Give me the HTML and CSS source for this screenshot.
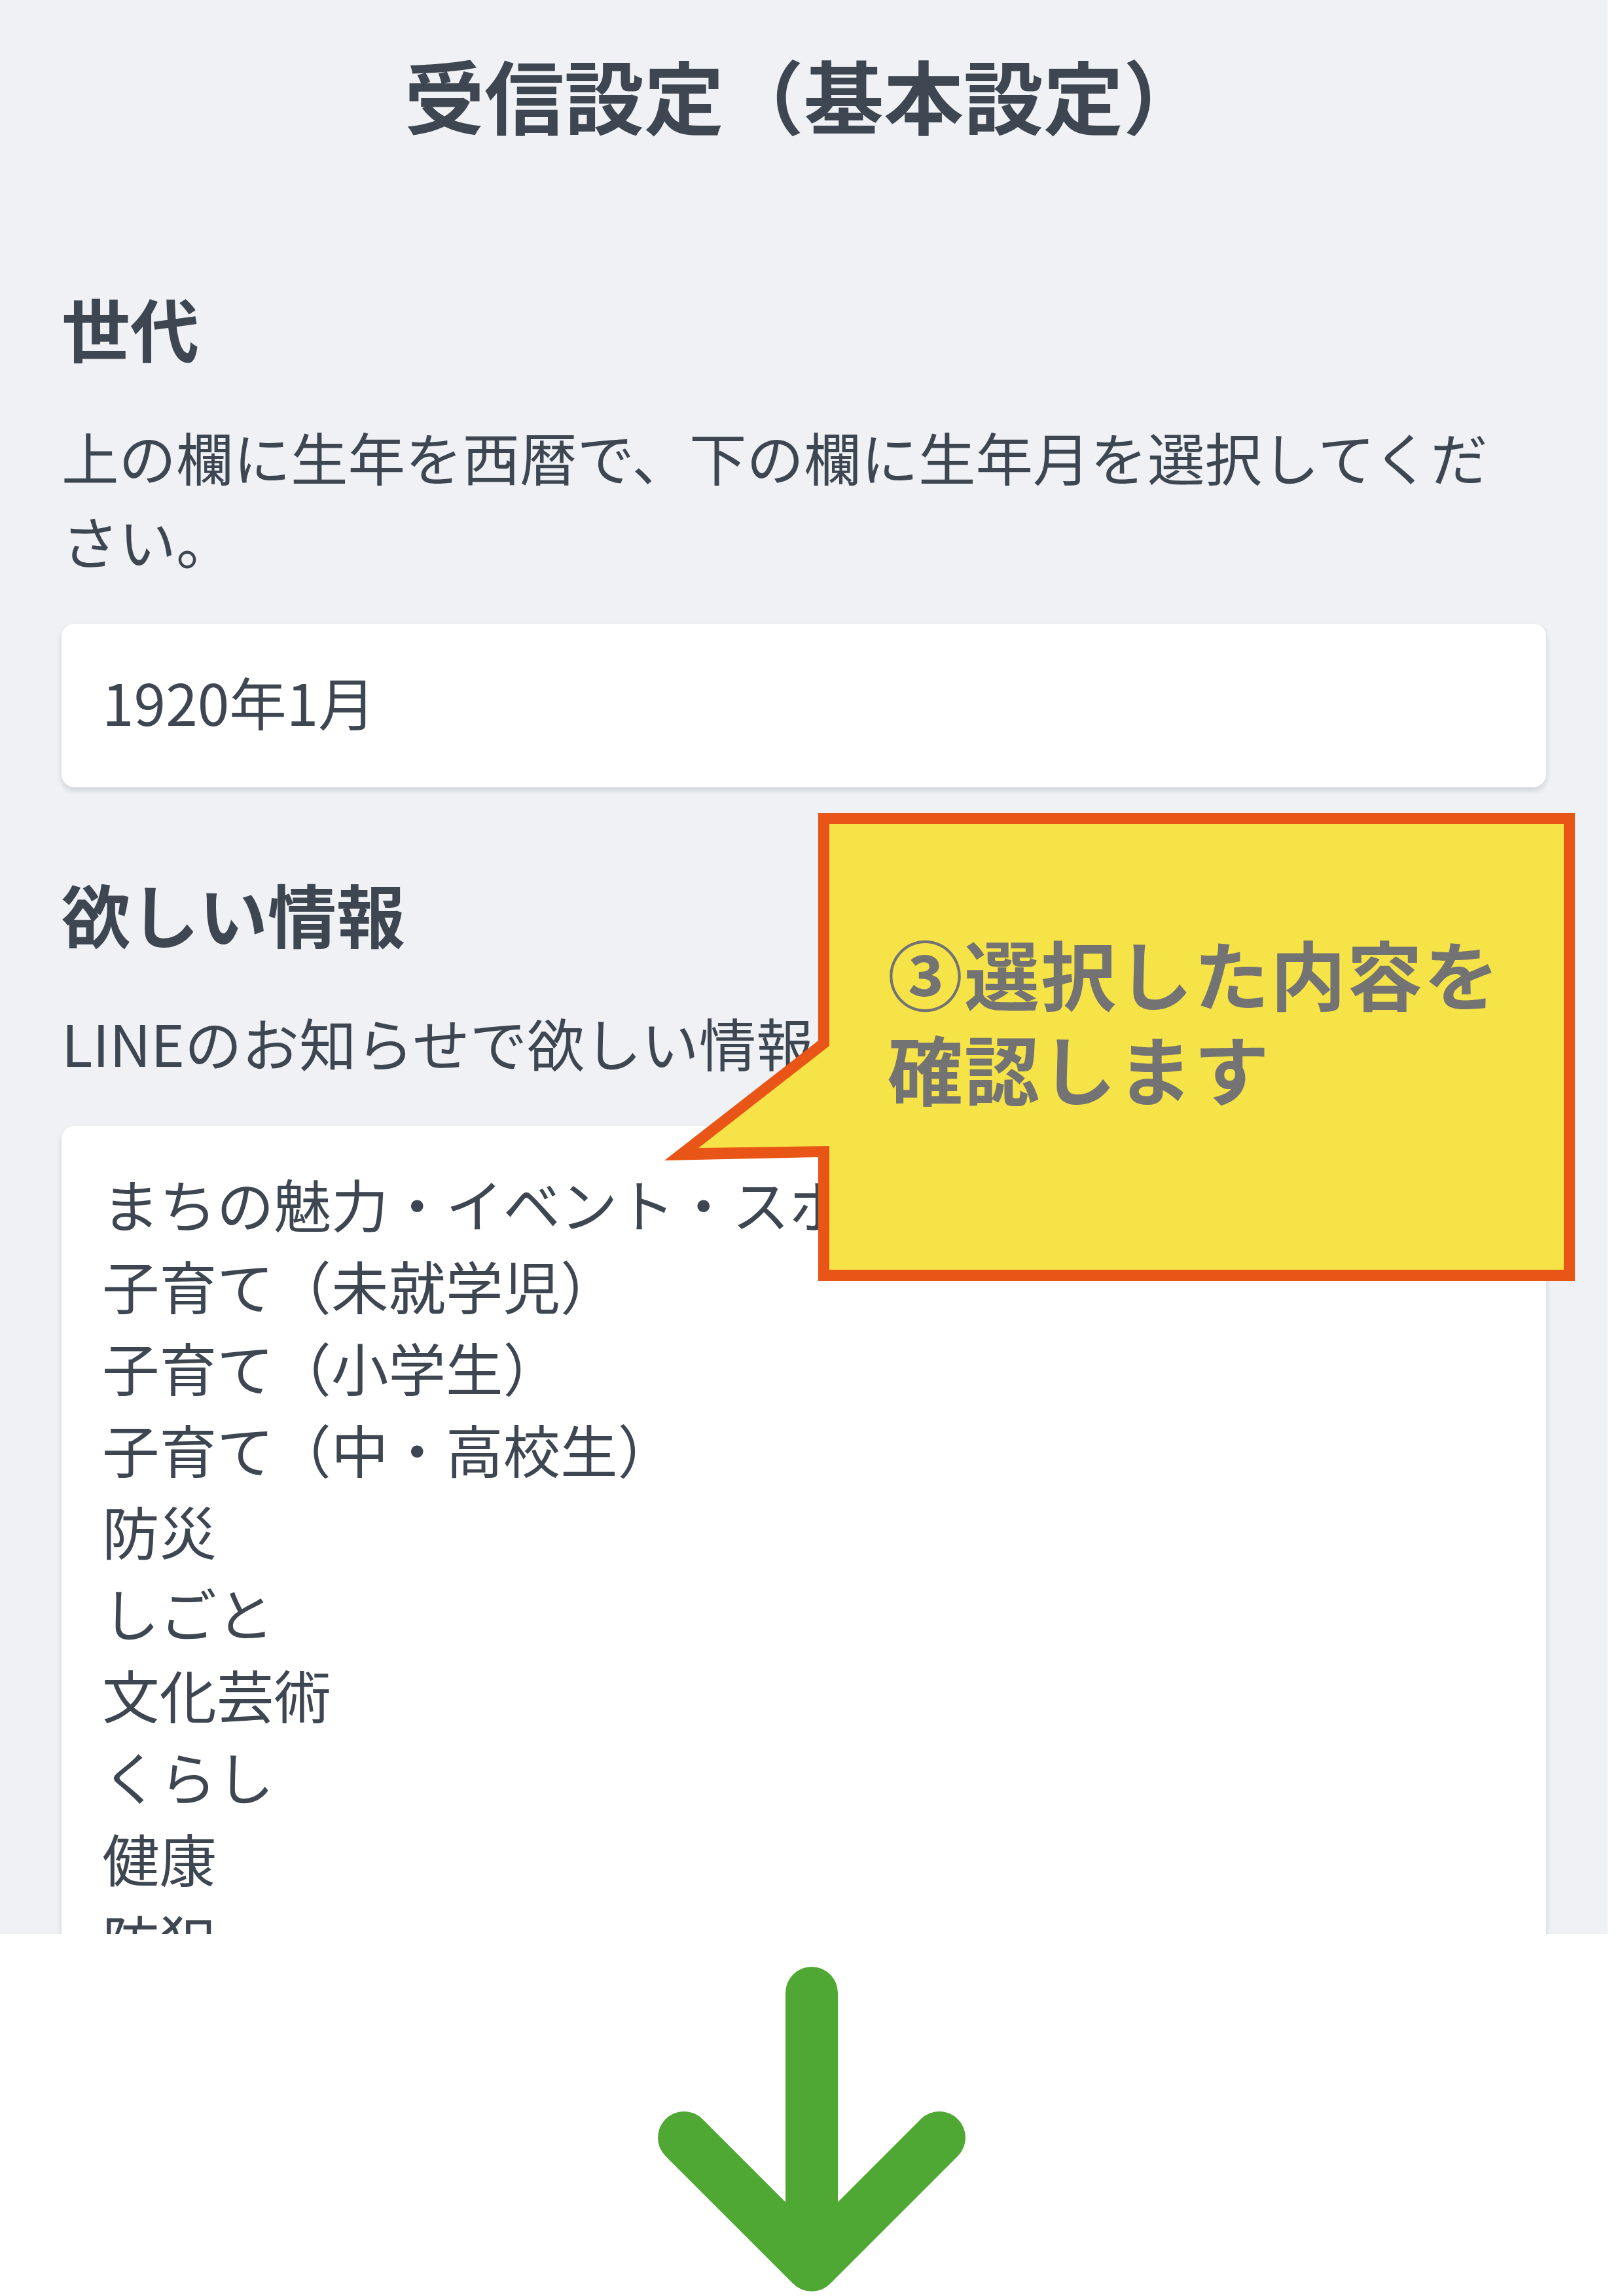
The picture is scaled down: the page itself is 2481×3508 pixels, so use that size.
FILE: index.html
```html
<!DOCTYPE html>
<html lang="ja">
<head>
<meta charset="utf-8">
<title>受信設定（基本設定）</title>
<link rel="stylesheet" href="styles.css">
</head>
<body>
<div class="shot">
  <main class="page">
    <h1 class="title">受信設定（基本設定）</h1>
    <section class="field">
      <h2 class="label">世代</h2>
      <p class="desc">上の欄に生年を西暦で、下の欄に生年月を選択してください。</p>
      <div class="input">1920年1月</div>
    </section>
    <section class="field field-next">
      <h2 class="label">欲しい情報</h2>
      <p class="desc">LINEのお知らせで欲しい情報を選択してください。</p>
      <ul class="select">
        <li>まちの魅力・イベント・スポーツ</li>
        <li>子育て（未就学児）</li>
        <li>子育て（小学生）</li>
        <li>子育て（中・高校生）</li>
        <li>防災</li>
        <li>しごと</li>
        <li>文化芸術</li>
        <li>くらし</li>
        <li>健康</li>
        <li>防犯</li>
        <li>福祉</li>
      </ul>
    </section>
  </main>
  <div class="callout">
    <svg class="callout-shape" viewBox="0 0 1391 715" width="1391" height="715">
      <polygon points="235,0 1391,0 1391,715 235,715 235,526 0,531 235,348" fill="#e95516"/>
      <polygon points="252,17 1374,17 1374,698 252,698 252,509 52,512 252,356" fill="#f6e348"/>
    </svg>
    <div class="callout-text">③選択した内容を確認します</div>
  </div>
</div>
<div class="arrow-area">
  <svg class="arrow" viewBox="0 0 2481 553" width="2481" height="553">
    <path d="M1240 90 V506 M1045 311 L1240 506 L1435 311" fill="none" stroke="#4fa833" stroke-width="80" stroke-linecap="round" stroke-linejoin="round"/>
  </svg>
</div>
</body>
</html>
```
FILE: styles.css
```css
html, body {
  margin: 0;
  padding: 0;
  background: #ffffff;
}
body {
  width: 2481px;
  font-family: "Noto Sans CJK JP", "Noto Sans", sans-serif;
}
.shot {
  position: relative;
  width: 2456px;
  height: 2955px;
  overflow: hidden;
  background: #eff1f5;
}
.page {
  padding: 55px 94px 0;
  color: #3e4751;
}
.title {
  margin: 0;
  font-size: 122px;
  font-weight: 700;
  line-height: 1.448;
  text-align: center;
}
.field {
  display: flex;
  flex-direction: column;
  margin-top: 191px;
}
.field-next {
  margin-top: 115px;
}
.label {
  margin: 0;
  font-size: 105px;
  font-weight: 700;
  line-height: 152px;
}
.desc {
  margin: 58px 40px 0 0;
  font-size: 87.5px;
  line-height: 128px;
}
.input {
  margin-top: 64px;
  background: #ffffff;
  border-radius: 20px;
  box-shadow: 0 5px 9px rgba(40, 50, 70, 0.16);
  padding: 55px 62px 69px;
  font-size: 87.5px;
  line-height: 126px;
}
.select {
  list-style: none;
  margin: 64px 0 0;
  padding: 55px 62px 80px;
  background: #ffffff;
  border-radius: 20px;
  box-shadow: 0 5px 9px rgba(40, 50, 70, 0.16);
  font-size: 87.5px;
  line-height: 125px;
}
.callout {
  position: absolute;
  left: 1015px;
  top: 1242px;
  width: 1391px;
  height: 715px;
}
.callout-shape {
  position: absolute;
  left: 0;
  top: 0;
  display: block;
}
.callout-text {
  position: absolute;
  left: 341px;
  top: 171px;
  width: 1010px;
  font-size: 115px;
  font-weight: 700;
  letter-spacing: 2px;
  line-height: 145px;
  color: #737373;
}
.arrow-area {
  height: 553px;
}
.arrow {
  display: block;
}
```
